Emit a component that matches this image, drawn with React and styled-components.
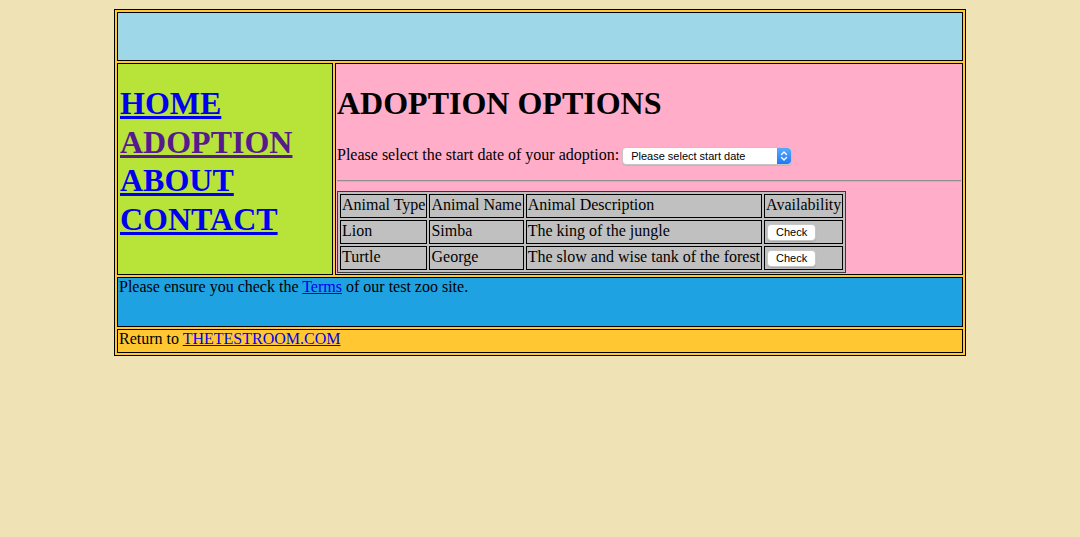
import React from 'react'
import styled, { createGlobalStyle } from 'styled-components'

const Global = createGlobalStyle`
  html, body { margin: 0; padding: 0; }
  body {
    background: #efe2b4;
    font-family: "Liberation Serif", "Times New Roman", serif;
    font-size: 16px;
    color: #000;
  }
`

const Page = styled.div`
  padding: 9px 0 0;
`

const Frame = styled.div`
  box-sizing: border-box;
  width: 852px;
  margin: 0 auto;
  border: 1px solid #000;
  background: #ffc832;
  padding: 2px;
  display: grid;
  grid-template-columns: 216px 1fr;
  gap: 2px;
`

const Cell = styled.div`
  box-sizing: border-box;
  border: 1px solid #000;
  background: ${p => p.$bg};
  padding: 1px;
  grid-column: ${p => (p.$wide ? '1 / -1' : 'auto')};
  min-height: ${p => p.$h || 'auto'};
  line-height: 16px;
`

const Nav = styled.nav`
  display: flex;
  flex-direction: column;
  margin-top: 19px;
`

const NavLink = styled.a`
  font-size: 32px;
  font-weight: bold;
  line-height: 38.7px;
  color: ${p => (p.$visited ? '#551a8b' : '#0000ee')};
  text-decoration: underline;
  padding-left: 1px;
`

const Title = styled.h1`
  font-size: 32px;
  font-weight: bold;
  line-height: 38.7px;
  margin: 19px 0 22px;
`

const Prompt = styled.p`
  margin: 0;
  line-height: 20px;
`

const Picker = styled.span`
  box-sizing: border-box;
  display: inline-flex;
  vertical-align: middle;
  width: 170px;
  height: 18px;
  margin-left: 3px;
  border: 1px solid #c4c4c4;
  border-radius: 4px;
  background: #fff;
  overflow: hidden;
  box-shadow: 0 1px 1px rgba(0, 0, 0, 0.08);
`

const NativeSelect = styled.select`
  appearance: none;
  -webkit-appearance: none;
  flex: 1;
  min-width: 0;
  border: none;
  background: transparent;
  font-family: "Liberation Sans", Arial, sans-serif;
  font-size: 11px;
  color: #000;
  padding: 0 0 0 8px;
  height: 16px;
  outline: none;
`

const Stepper = styled.span`
  width: 14px;
  display: flex;
  align-items: center;
  justify-content: center;
  background: linear-gradient(#5aa9fb, #1f78f5);
  border-radius: 0 3px 3px 0;
`

const Rule = styled.hr`
  margin: 14.5px 0 9px;
  border: none;
  border-top: 1px solid #8f8f8f;
  border-bottom: 1px solid #e8a3bb;
  height: 0;
`

const Table = styled.table`
  border: 1px solid #3a3a3a;
  border-spacing: 2px;
  background: #c0c0c0;
`

const Td = styled.td`
  box-sizing: content-box;
  border: 1px solid #000;
  padding: 2px 1px 1px;
  height: 19px;
  line-height: 16px;
  vertical-align: top;
  white-space: nowrap;
`

const CheckButton = styled.button`
  box-sizing: border-box;
  width: 49px;
  height: 17px;
  margin: 0 0 0 1px;
  padding: 0;
  border: 1px solid #c6c6c6;
  border-radius: 4px;
  background: #fff;
  box-shadow: 0 1px 1px rgba(0, 0, 0, 0.12);
  font-family: "Liberation Sans", Arial, sans-serif;
  font-size: 11px;
  color: #000;
  line-height: 15px;
`

const TextLink = styled.a`
  color: #0000ee;
  text-decoration: underline;
`

const animals = [
  { type: 'Lion', name: 'Simba', desc: 'The king of the jungle' },
  { type: 'Turtle', name: 'George', desc: 'The slow and wise tank of the forest' },
]

export default function App() {
  return (
    <>
      <Global />
      <Page>
        <Frame>
          <Cell $wide $bg="#9ed8e8" $h="49px" />
          <Cell $bg="#b8e43a">
            <Nav>
              <NavLink href="#home">HOME</NavLink>
              <NavLink href="#adoption" $visited>ADOPTION</NavLink>
              <NavLink href="#about">ABOUT</NavLink>
              <NavLink href="#contact">CONTACT</NavLink>
            </Nav>
          </Cell>
          <Cell $bg="#ffadc9">
            <Title>ADOPTION OPTIONS</Title>
            <Prompt>
              Please select the start date of your adoption:
              <Picker>
                <NativeSelect defaultValue="">
                  <option value="">Please select start date</option>
                  <option value="today">Today</option>
                  <option value="tomorrow">Tomorrow</option>
                </NativeSelect>
                <Stepper>
                  <svg width="8" height="12" viewBox="0 0 8 12" fill="none" stroke="#fff" strokeWidth="1.4" strokeLinecap="round" strokeLinejoin="round">
                    <path d="M1.5 4.5 L4 2 L6.5 4.5" />
                    <path d="M1.5 7.5 L4 10 L6.5 7.5" />
                  </svg>
                </Stepper>
              </Picker>
            </Prompt>
            <Rule />
            <Table>
              <tbody>
                <tr>
                  <Td>Animal Type</Td>
                  <Td>Animal Name</Td>
                  <Td>Animal Description</Td>
                  <Td>Availability</Td>
                </tr>
                {animals.map(a => (
                  <tr key={a.name}>
                    <Td>{a.type}</Td>
                    <Td>{a.name}</Td>
                    <Td>{a.desc}</Td>
                    <Td><CheckButton>Check</CheckButton></Td>
                  </tr>
                ))}
              </tbody>
            </Table>
          </Cell>
          <Cell $wide $bg="#1fa2e2" $h="50px">
            Please ensure you check the <TextLink href="#terms">Terms</TextLink> of our test zoo site.
          </Cell>
          <Cell $wide $bg="#ffc832" $h="24px">
            Return to <TextLink href="#testroom">THETESTROOM.COM</TextLink>
          </Cell>
        </Frame>
      </Page>
    </>
  )
}
